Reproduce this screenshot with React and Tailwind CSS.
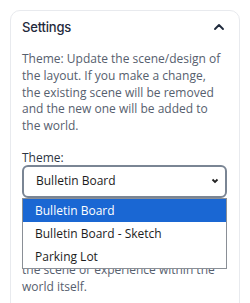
import { ChevronUp } from 'lucide-react'

const options = ['Bulletin Board', 'Bulletin Board - Sketch', 'Parking Lot']

const App = () => {
  return (
    <main className="h-[303px] overflow-hidden bg-white p-[10px] font-['Open_Sans',sans-serif]">
      <section className="h-[320px] rounded-[10px] border border-[#e8eaee] bg-white px-[11px] pt-[5px]">
        <header className="flex items-center justify-between">
          <h2 className="font-['Inter',sans-serif] text-[13px] font-medium leading-[22px] tracking-[-0.2px] text-[#1f2a3c]">
            Settings
          </h2>
          <ChevronUp size={16} strokeWidth={2.8} className="mr-[1px] text-[#1f2a3c]" />
        </header>

        <p className="mt-[13px] text-[12px] leading-[16.75px] text-[#56606e]">
          Theme: Update the scene/design of the layout. If you make a change,
          <br />
          the existing scene will be removed and the new one will be added to the world.
        </p>

        <label className="mt-[16px] block text-[12px] leading-[14px] text-[#2d3442]">Theme:</label>

        <div className="relative pr-[1px]">
          <div className="flex h-[33px] items-center justify-between rounded-[6px] border-2 border-[#7a8594] bg-white pl-[12px] pr-[5px]">
            <span className="text-[12px] text-[#1c1c1c]">Bulletin Board</span>
            <svg width="10" height="10" viewBox="0 0 10 10" className="text-[#222]">
              <path d="M2.5 3.5 L5 6 L7.5 3.5" fill="none" stroke="currentColor" strokeWidth="1.8" />
            </svg>
          </div>

          <ul className="absolute left-0 right-[1px] top-[33px] border border-[#8a8f96] bg-white">
            {options.map((option, index) => (
              <li
                key={option}
                className={
                  index === 0
                    ? 'h-[23px] bg-[#1a67d3] pl-[12px] text-[12px] leading-[23px] text-white'
                    : 'h-[23px] pl-[12px] text-[12px] leading-[23px] text-[#1c1c1c]'
                }
              >
                {option}
              </li>
            ))}
          </ul>
        </div>

        <p className="mt-[14px] text-[12px] leading-[16.75px] text-[#56606e]">
          Description: Add a short note to explain what visitors can expect to discover when they
          arrive,
          <br />
          the scene or experience within the world itself.
        </p>
      </section>
    </main>
  )
}

export default App
